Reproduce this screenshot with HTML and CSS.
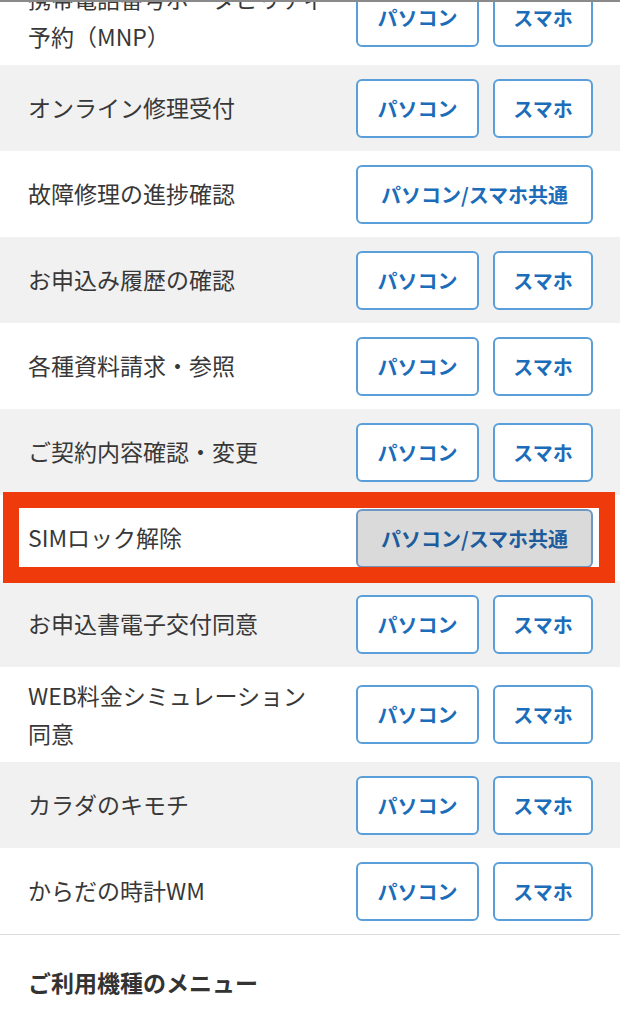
FILE: index.html
```html
<!DOCTYPE html>
<html lang="ja">
<head>
<meta charset="utf-8">
<title>メニュー</title>
<link rel="stylesheet" href="styles.css">
</head>
<body>
<div class="topline"></div>
<main class="list">
  <div class="row">
    <div class="label">携帯電話番号ポータビリティ<br>予約（MNP）</div>
    <div class="btns"><a class="btn pc">パソコン</a><a class="btn sp">スマホ</a></div>
  </div>
  <div class="row">
    <div class="label">オンライン修理受付</div>
    <div class="btns"><a class="btn pc">パソコン</a><a class="btn sp">スマホ</a></div>
  </div>
  <div class="row">
    <div class="label">故障修理の進捗確認</div>
    <div class="btns"><a class="btn both">パソコン/スマホ共通</a></div>
  </div>
  <div class="row">
    <div class="label">お申込み履歴の確認</div>
    <div class="btns"><a class="btn pc">パソコン</a><a class="btn sp">スマホ</a></div>
  </div>
  <div class="row">
    <div class="label">各種資料請求・参照</div>
    <div class="btns"><a class="btn pc">パソコン</a><a class="btn sp">スマホ</a></div>
  </div>
  <div class="row">
    <div class="label">ご契約内容確認・変更</div>
    <div class="btns"><a class="btn pc">パソコン</a><a class="btn sp">スマホ</a></div>
  </div>
  <div class="row">
    <div class="label">SIMロック解除</div>
    <div class="btns"><a class="btn both active">パソコン/スマホ共通</a></div>
  </div>
  <div class="row">
    <div class="label">お申込書電子交付同意</div>
    <div class="btns"><a class="btn pc">パソコン</a><a class="btn sp">スマホ</a></div>
  </div>
  <div class="row">
    <div class="label">WEB料金シミュレーション<br>同意</div>
    <div class="btns"><a class="btn pc">パソコン</a><a class="btn sp">スマホ</a></div>
  </div>
  <div class="row">
    <div class="label">カラダのキモチ</div>
    <div class="btns"><a class="btn pc">パソコン</a><a class="btn sp">スマホ</a></div>
  </div>
  <div class="row">
    <div class="label">からだの時計WM</div>
    <div class="btns"><a class="btn pc">パソコン</a><a class="btn sp">スマホ</a></div>
  </div>
</main>
<section class="section">
  <h2 class="section-title">ご利用機種のメニュー</h2>
</section>
<div class="highlight"></div>
</body>
</html>
```

FILE: styles.css
```css
html, body {
  margin: 0;
  padding: 0;
  background: #ffffff;
}
body {
  font-family: "Noto Sans CJK JP", "Noto Sans", sans-serif;
  color: #333333;
  position: relative;
  overflow: hidden;
  height: 1024px;
}
.topline {
  position: fixed;
  top: 0;
  left: 0;
  right: 0;
  height: 2px;
  background: #8a8a8a;
  z-index: 5;
}
.list {
  margin-top: -30px;
  border-bottom: 1px solid #dcdcdc;
}
.row {
  display: flex;
  align-items: center;
  justify-content: space-between;
  min-height: 86px;
  box-sizing: border-box;
  padding: 10px 27px 10px 28px;
  background: #ffffff;
}
.row:nth-child(even) {
  background: #f1f1f1;
}
.label {
  font-size: 23px;
  line-height: 37.5px;
  color: #383838;
  letter-spacing: 0;
}
.btns {
  display: flex;
  gap: 14px;
  flex: none;
}
.btn {
  display: flex;
  align-items: center;
  justify-content: center;
  height: 59px;
  box-sizing: border-box;
  border: 2px solid #5a9fd9;
  border-radius: 6px;
  background: #ffffff;
  color: #1b6cb9;
  font-size: 20px;
  font-weight: 700;
  text-decoration: none;
}
.btn.pc { width: 123px; }
.btn.sp { width: 100px; }
.btn.both { width: 237px; }
.btn.active {
  background: #dadada;
  border-color: #6d98c4;
  color: #1d5c9c;
}
.section {
  padding: 30px 28px 0;
}
.section-title {
  margin: 0;
  font-size: 23px;
  line-height: 34px;
  font-weight: 700;
  color: #333333;
}
.highlight {
  position: absolute;
  left: 3px;
  top: 492px;
  width: 612px;
  height: 91px;
  box-sizing: border-box;
  border: 16px solid #ef3b0b;
  pointer-events: none;
}
```
